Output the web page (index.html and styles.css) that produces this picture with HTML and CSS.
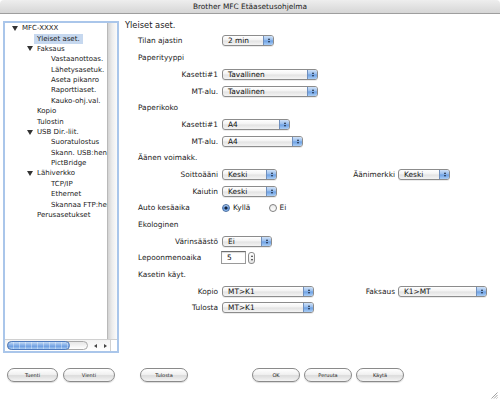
FILE: index.html
```html
<!DOCTYPE html>
<html lang="fi">
<head>
<meta charset="utf-8">
<title>Brother MFC Etäasetusohjelma</title>
<link rel="stylesheet" href="styles.css">
</head>
<body>
<div class="window">
  <div class="titlebar">Brother MFC Etäasetusohjelma</div>
  <div class="main">
    <div class="tree-box">
      <div class="tree-top">
        <div class="tree-list">
          <div class="item l0"><span class="tw"><i class="tri"></i></span><span>MFC-XXXX</span></div>
          <div class="item l1n"><span class="sel">Yleiset aset.</span></div>
          <div class="item l1"><span class="tw"><i class="tri"></i></span><span>Faksaus</span></div>
          <div class="item l2">Vastaanottoas.</div>
          <div class="item l2">Lähetysasetuk.</div>
          <div class="item l2">Aseta pikanro</div>
          <div class="item l2">Raporttiaset.</div>
          <div class="item l2">Kauko-ohj.val.</div>
          <div class="item l1n">Kopio</div>
          <div class="item l1n">Tulostin</div>
          <div class="item l1"><span class="tw"><i class="tri"></i></span><span>USB Dir.-liit.</span></div>
          <div class="item l2">Suoratulostus</div>
          <div class="item l2">Skann. USB:hen</div>
          <div class="item l2">PictBridge</div>
          <div class="item l1"><span class="tw"><i class="tri"></i></span><span>Lähiverkko</span></div>
          <div class="item l2">TCP/IP</div>
          <div class="item l2">Ethernet</div>
          <div class="item l2">Skannaa FTP:hen</div>
          <div class="item l1n">Perusasetukset</div>
        </div>
        <div class="vscroll"></div>
      </div>
      <div class="hscroll">
        <div class="htrack"><div class="thumb"></div></div>
        <div class="harrows"><span class="al"></span><span class="ar"></span></div>
        <div class="corner"></div>
      </div>
    </div>
    <div class="right">
      <div class="heading">Yleiset aset.</div>
      <div class="row"><div class="c1 left">Tilan ajastin</div><div class="c2"><div class="popup w52"><span class="val">2 min</span><span class="arrows"></span></div></div></div>
      <div class="row"><div class="sec">Paperityyppi</div></div>
      <div class="row"><div class="c1">Kasetti#1</div><div class="c2"><div class="popup w96"><span class="val">Tavallinen</span><span class="arrows"></span></div></div></div>
      <div class="row"><div class="c1">MT-alu.</div><div class="c2"><div class="popup w96"><span class="val">Tavallinen</span><span class="arrows"></span></div></div></div>
      <div class="row"><div class="sec">Paperikoko</div></div>
      <div class="row"><div class="c1">Kasetti#1</div><div class="c2"><div class="popup w68"><span class="val">A4</span><span class="arrows"></span></div></div></div>
      <div class="row"><div class="c1">MT-alu.</div><div class="c2"><div class="popup w81"><span class="val">A4</span><span class="arrows"></span></div></div></div>
      <div class="row"><div class="sec">Äänen voimakk.</div></div>
      <div class="row"><div class="c1">Soittoääni</div><div class="c2"><div class="popup w55"><span class="val">Keski</span><span class="arrows"></span></div></div><div class="c3">Äänimerkki</div><div class="popup w52"><span class="val">Keski</span><span class="arrows"></span></div></div>
      <div class="row"><div class="c1">Kaiutin</div><div class="c2"><div class="popup w55"><span class="val">Keski</span><span class="arrows"></span></div></div></div>
      <div class="row"><div class="c1 left">Auto kesäaika</div><div class="c2"><div class="radio-opt"><span class="radio on"></span><span>Kyllä</span></div><div class="radio-opt"><span class="radio"></span><span>Ei</span></div></div></div>
      <div class="row"><div class="sec">Ekologinen</div></div>
      <div class="row"><div class="c1">Värinsäästö</div><div class="c2"><div class="popup w50"><span class="val">Ei</span><span class="arrows"></span></div></div></div>
      <div class="row"><div class="c1 left">Lepoonmenoaika</div><div class="c2"><div class="field">5</div><div class="stepper"><i class="up"></i><i class="down"></i></div></div></div>
      <div class="row"><div class="sec">Kasetin käyt.</div></div>
      <div class="row"><div class="c1">Kopio</div><div class="c2"><div class="popup w92"><span class="val">MT&gt;K1</span><span class="arrows"></span></div></div><div class="c3">Faksaus</div><div class="popup w89"><span class="val">K1&gt;MT</span><span class="arrows"></span></div></div>
      <div class="row"><div class="c1">Tulosta</div><div class="c2"><div class="popup w92"><span class="val">MT&gt;K1</span><span class="arrows"></span></div></div></div>
    </div>
  </div>
  <div class="buttons">
    <div class="btn b-tuenti">Tuenti</div>
    <div class="btn b-vienti">Vienti</div>
    <div class="btn b-tulosta">Tulosta</div>
    <div class="btn b-ok">OK</div>
    <div class="btn b-peruuta">Peruuta</div>
    <div class="btn b-kayta">Käytä</div>
  </div>
  <div class="footer">
    <svg class="grip" width="8" height="8" viewBox="0 0 8 8"><path d="M7.5 1.5L1.5 7.5M7.5 4L4 7.5M7.5 6.5L6.5 7.5" stroke="#8a8a8a" stroke-width="0.8" fill="none"/></svg>
  </div>
</div>
</body>
</html>
```

FILE: styles.css
```css
html, body {
  margin: 0;
  padding: 0;
  background: #fff;
}
body {
  width: 500px;
  height: 401px;
  overflow: hidden;
  font-family: "DejaVu Sans", "Liberation Sans", sans-serif;
  color: #1a1a1a;
}
.window {
  display: flex;
  flex-direction: column;
  width: 500px;
  height: 401px;
}
.titlebar {
  height: 14px;
  box-sizing: border-box;
  background: linear-gradient(#eeeeee, #d6d6d6);
  border-bottom: 1px solid #9e9e9e;
  border-radius: 4px 4px 0 0;
  display: flex;
  align-items: center;
  justify-content: center;
  font-size: 7.4px;
  color: #222;
  flex-shrink: 0;
}
.main {
  display: flex;
  height: 339px;
  box-sizing: border-box;
  padding: 7px 0 0 3px;
  flex-shrink: 0;
}
.tree-box {
  width: 116px;
  height: 332px;
  box-sizing: border-box;
  border: 2px solid #aac6ea;
  display: flex;
  flex-direction: column;
  flex-shrink: 0;
}
.tree-top {
  flex: 1;
  display: flex;
  min-height: 0;
}
.tree-list {
  flex: 1;
  font-size: 7px;
  overflow: hidden;
}
.item {
  height: 10.4px;
  line-height: 10.4px;
  white-space: nowrap;
  display: flex;
  align-items: center;
}
.tw {
  width: 10px;
  flex-shrink: 0;
  display: flex;
  align-items: center;
}
.tri {
  display: block;
  width: 0;
  height: 0;
  border-left: 3px solid transparent;
  border-right: 3px solid transparent;
  border-top: 5px solid #333;
}
.l0 { padding-left: 7px; }
.l1 { padding-left: 22px; }
.l1n { padding-left: 32px; }
.l2 { padding-left: 46px; }
.sel {
  background: #c6d8ef;
  padding: 0 3px;
  margin-left: -3px;
  height: 10px;
  line-height: 10px;
}
.vscroll {
  width: 9px;
  border-left: 1px solid #b9b9b9;
  background: linear-gradient(to right, #d2d2d2, #ececec 45%, #fbfbfb);
}
.hscroll {
  height: 11px;
  display: flex;
  align-items: center;
  border-top: 1px solid #d0d0d0;
  background: linear-gradient(#f3f3f3, #ffffff);
  flex-shrink: 0;
}
.htrack {
  width: 81px;
  height: 9px;
  margin-left: 2px;
  box-sizing: border-box;
  border: 1px solid #a9a9a9;
  border-radius: 5px;
  background: linear-gradient(#e6e6e6, #ffffff);
  display: flex;
}
.thumb {
  width: 63px;
  height: 100%;
  box-sizing: border-box;
  margin: -1px 0 0 -1px;
  height: 9px;
  border: 1px solid #4d79bb;
  border-radius: 5px;
  background:
    repeating-linear-gradient(90deg, rgba(255,255,255,0) 0 5px, rgba(255,255,255,.35) 5px 6px),
    linear-gradient(#c4dbf6, #7fabe6 50%, #5f93dc 51%, #a8cbf3);
}
.harrows {
  width: 20px;
  display: flex;
  align-items: center;
  justify-content: space-around;
  padding-left: 2px;
}
.al, .ar {
  width: 0;
  height: 0;
  border-top: 2px solid transparent;
  border-bottom: 2px solid transparent;
}
.al { border-right: 3px solid #444; }
.ar { border-left: 3px solid #444; }
.corner {
  flex: 1;
  height: 100%;
  border-left: 1px solid #d0d0d0;
  background: #fff;
}
.right {
  flex: 1;
  padding-left: 6px;
  font-size: 7.4px;
}
.heading {
  font-size: 8.3px;
  height: 9px;
  line-height: 9px;
  margin-bottom: 2.65px;
}
.row {
  height: 16.7px;
  display: flex;
  align-items: center;
  padding-left: 13px;
  white-space: nowrap;
}
.sec { }
.c1 {
  width: 80px;
  margin-right: 4px;
  text-align: right;
  flex-shrink: 0;
}
.c1.left { text-align: left; }
.c2 {
  width: 93px;
  display: flex;
  align-items: center;
  flex-shrink: 0;
}
.c3 {
  width: 80px;
  margin-right: 3px;
  text-align: right;
  flex-shrink: 0;
}
.popup {
  height: 11px;
  box-sizing: border-box;
  border: 1px solid #8c8c8c;
  border-radius: 3px;
  background: linear-gradient(#ffffff, #f2f2f2 48%, #e2e2e2 52%, #f4f4f4);
  display: flex;
  align-items: center;
  flex-shrink: 0;
  box-shadow: 0 1px 0 rgba(0,0,0,0.08);
  overflow: hidden;
}
.val {
  flex: 1;
  padding-left: 5px;
  line-height: 9px;
  color: #111;
}
.arrows {
  width: 10px;
  height: 100%;
  box-sizing: border-box;
  border-left: 1px solid #6f8fbd;
  background: linear-gradient(#cfe1f7, #94bbec 48%, #6b9fe3 52%, #a9cdf5);
  display: flex;
  flex-direction: column;
  align-items: center;
  justify-content: center;
  gap: 1px;
}
.arrows::before, .arrows::after {
  content: "";
  width: 0;
  height: 0;
  border-left: 1.5px solid transparent;
  border-right: 1.5px solid transparent;
}
.arrows::before { border-bottom: 2px solid #1c2a40; }
.arrows::after { border-top: 2px solid #1c2a40; }
.w50 { width: 50px; }
.w52 { width: 52px; }
.w55 { width: 55px; }
.w68 { width: 68px; }
.w81 { width: 81px; }
.w89 { width: 89px; }
.w92 { width: 92px; }
.w96 { width: 96px; }
.radio-opt {
  display: flex;
  align-items: center;
  width: 48px;
}
.radio {
  width: 8px;
  height: 8px;
  box-sizing: border-box;
  border-radius: 50%;
  border: 1px solid #808080;
  background: linear-gradient(#e9e9e9, #ffffff);
  margin-right: 3px;
  flex-shrink: 0;
}
.radio.on {
  border-color: #4a6e9f;
  background:
    radial-gradient(circle, #16243a 0 1.3px, rgba(0,0,0,0) 1.8px),
    linear-gradient(#b6d2f4, #6b9de2 50%, #5a8fdb 51%, #93bff2);
}
.field {
  width: 25px;
  height: 13px;
  box-sizing: border-box;
  margin-left: -1px;
  border: 1px solid #9a9a9a;
  border-top-color: #6e6e6e;
  box-shadow: inset 0 1px 1px rgba(0,0,0,0.15);
  background: #fff;
  padding-left: 5px;
  line-height: 11px;
  color: #111;
}
.stepper {
  width: 7px;
  height: 12px;
  box-sizing: border-box;
  margin-left: 2px;
  border: 1px solid #8c8c8c;
  border-radius: 3px;
  background: linear-gradient(#ffffff, #e4e4e4);
  display: flex;
  flex-direction: column;
  align-items: center;
  justify-content: center;
  gap: 2px;
}
.stepper i {
  display: block;
  width: 0;
  height: 0;
  border-left: 1.5px solid transparent;
  border-right: 1.5px solid transparent;
}
.stepper .up { border-bottom: 2px solid #333; }
.stepper .down { border-top: 2px solid #333; }
.buttons {
  display: flex;
  padding: 15px 0 0 7px;
  height: 29px;
  box-sizing: border-box;
  flex-shrink: 0;
}
.btn {
  height: 14px;
  box-sizing: border-box;
  border: 1px solid #8a8a8a;
  border-radius: 7px;
  background: linear-gradient(#ffffff, #f1f1f1 45%, #dcdcdc 55%, #f4f4f4);
  box-shadow: 0 1px 1px rgba(0,0,0,0.15);
  display: flex;
  align-items: center;
  justify-content: center;
  font-size: 5px;
  color: #222;
  flex-shrink: 0;
}
.b-tuenti { width: 51px; }
.b-vienti { width: 52px; margin-left: 5px; }
.b-tulosta { width: 48px; margin-left: 25px; }
.b-ok { width: 48px; margin-left: 64px; }
.b-peruuta { width: 48px; margin-left: 4px; }
.b-kayta { width: 48px; margin-left: 4px; }
.footer {
  flex: 1;
  display: flex;
  justify-content: flex-end;
  align-items: flex-end;
  padding: 0 2px 2px 0;
}
.grip { display: block; }
```
